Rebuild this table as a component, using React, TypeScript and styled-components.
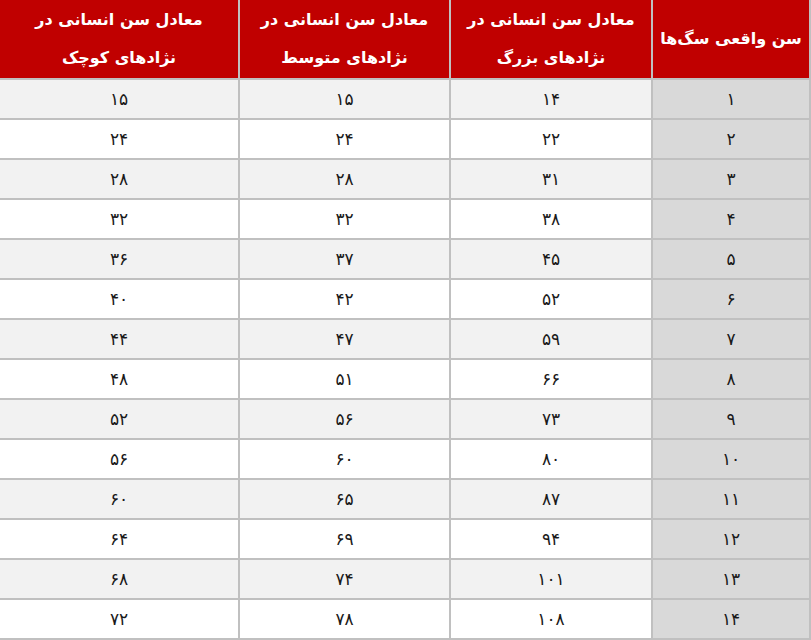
import styled, { createGlobalStyle } from 'styled-components'

const GlobalStyle = createGlobalStyle`
  html, body {
    margin: 0;
    padding: 0;
    background: #ffffff;
  }
  body {
    font-family: "DejaVu Sans", "Noto Sans", sans-serif;
  }
`

const Table = styled.div`
  direction: rtl;
  width: 811px;
  display: grid;
  grid-template-columns: 156px 200px 209px 238px;
  grid-template-rows: 78px repeat(14, 38px);
  gap: 2px;
  padding: 0 0 2px 0;
  border-right: 2px solid #c0c0c0;
  box-sizing: border-box;
  background: #c0c0c0;
`

const HeadCell = styled.div<{ $single?: boolean }>`
  background: #c00000;
  color: #ffffff;
  font-weight: bold;
  font-size: 16px;
  line-height: 38px;
  display: flex;
  align-items: center;
  justify-content: center;
  text-align: center;
  padding: 0 ${p => (p.$single ? '0' : '12px')};
  white-space: ${p => (p.$single ? 'nowrap' : 'normal')};
`

const Cell = styled.div<{ $first?: boolean; $shade?: boolean }>`
  background: ${p => (p.$first ? '#d9d9d9' : p.$shade ? '#f2f2f2' : '#ffffff')};
  color: #1a1a1a;
  font-size: 17px;
  display: flex;
  align-items: center;
  justify-content: center;
`

const toFa = (n: number) => String(n).replace(/\d/g, d => '۰۱۲۳۴۵۶۷۸۹'[Number(d)])

const rows = [
  [1, 14, 15, 15],
  [2, 22, 24, 24],
  [3, 31, 28, 28],
  [4, 38, 32, 32],
  [5, 45, 37, 36],
  [6, 52, 42, 40],
  [7, 59, 47, 44],
  [8, 66, 51, 48],
  [9, 73, 56, 52],
  [10, 80, 60, 56],
  [11, 87, 65, 60],
  [12, 94, 69, 64],
  [13, 101, 74, 68],
  [14, 108, 78, 72],
]

export default function App() {
  return (
    <>
      <GlobalStyle />
      <Table>
        <HeadCell $single>سن واقعی سگ‌ها</HeadCell>
        <HeadCell>معادل سن انسانی در نژادهای بزرگ</HeadCell>
        <HeadCell>معادل سن انسانی در نژادهای متوسط</HeadCell>
        <HeadCell>معادل سن انسانی در نژادهای کوچک</HeadCell>
        {rows.map((r, i) =>
          r.map((v, j) => (
            <Cell key={`${i}-${j}`} $first={j === 0} $shade={i % 2 === 0}>
              {toFa(v)}
            </Cell>
          ))
        )}
      </Table>
    </>
  )
}
